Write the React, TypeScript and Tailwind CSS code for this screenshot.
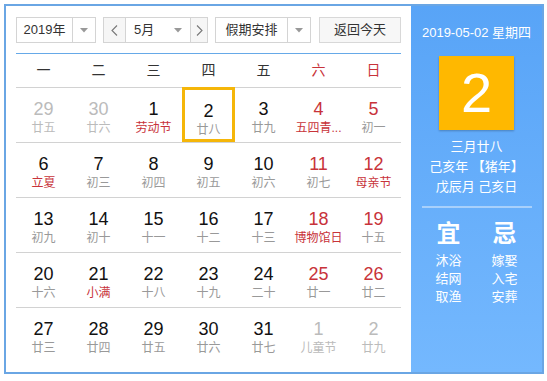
import React from 'react';

// Month view data: [day, lunar, dayTone, lunarTone]
type Tone = 'n' | 'r' | 'g';
type Cell = [string, string, Tone, Tone];

const weeks: Cell[][] = [
  [
    ['29', '廿五', 'g', 'g'],
    ['30', '廿六', 'g', 'g'],
    ['1', '劳动节', 'n', 'r'],
    ['2', '廿八', 'n', 'n'],
    ['3', '廿九', 'n', 'n'],
    ['4', '五四青...', 'r', 'r'],
    ['5', '初一', 'r', 'n'],
  ],
  [
    ['6', '立夏', 'n', 'r'],
    ['7', '初三', 'n', 'n'],
    ['8', '初四', 'n', 'n'],
    ['9', '初五', 'n', 'n'],
    ['10', '初六', 'n', 'n'],
    ['11', '初七', 'r', 'n'],
    ['12', '母亲节', 'r', 'r'],
  ],
  [
    ['13', '初九', 'n', 'n'],
    ['14', '初十', 'n', 'n'],
    ['15', '十一', 'n', 'n'],
    ['16', '十二', 'n', 'n'],
    ['17', '十三', 'n', 'n'],
    ['18', '博物馆日', 'r', 'r'],
    ['19', '十五', 'r', 'n'],
  ],
  [
    ['20', '十六', 'n', 'n'],
    ['21', '小满', 'n', 'r'],
    ['22', '十八', 'n', 'n'],
    ['23', '十九', 'n', 'n'],
    ['24', '二十', 'n', 'n'],
    ['25', '廿一', 'r', 'n'],
    ['26', '廿二', 'r', 'n'],
  ],
  [
    ['27', '廿三', 'n', 'n'],
    ['28', '廿四', 'n', 'n'],
    ['29', '廿五', 'n', 'n'],
    ['30', '廿六', 'n', 'n'],
    ['31', '廿七', 'n', 'n'],
    ['1', '儿童节', 'g', 'g'],
    ['2', '廿九', 'g', 'g'],
  ],
];

const weekdays = ['一', '二', '三', '四', '五', '六', '日'];

const dayColor = { n: 'text-[#111]', r: 'text-[#c8333a]', g: 'text-[#bbbbbb]' };
const lunarColor = { n: 'text-[#999999]', r: 'text-[#c8333a]', g: 'text-[#bbbbbb]' };

const Caret = () => (
  <svg width="8" height="5" viewBox="0 0 8 5" className="block">
    <path d="M0 0 L8 0 L4 4.5 Z" fill="#999" />
  </svg>
);

const Chevron = ({ dir }: { dir: 'l' | 'r' }) => (
  <svg width="7" height="11" viewBox="0 0 7 11" className="block">
    <path
      d={dir === 'l' ? 'M6 0.5 L1 5.5 L6 10.5' : 'M1 0.5 L6 5.5 L1 10.5'}
      fill="none"
      stroke="#777"
      strokeWidth="1.1"
    />
  </svg>
);

const App = () => {
  return (
    <div
      className="w-[547px] h-[381px] bg-white pt-1 pl-1"
      style={{ fontFamily: '"Liberation Sans", "Noto Sans CJK SC", sans-serif' }}
    >
      <div className="w-[540px] h-[370px] border-2 border-[#6aa6e4] flex">
        {/* calendar */}
        <div className="w-[405px] pt-[11px] px-[10px] flex flex-col">
          <div className="flex h-[26px] text-[13px] text-[#333]">
            <div className="w-[80px] flex border border-[#d4d4d4]">
              <div className="w-[55px] flex items-center justify-center">2019年</div>
              <div className="flex-1 border-l border-[#d4d4d4] flex items-center justify-center">
                <Caret />
              </div>
            </div>
            <div className="w-[105px] ml-[7px] flex border border-[#d4d4d4]">
              <div className="w-[22px] bg-[#f6f6f6] border-r border-[#d4d4d4] flex items-center justify-center">
                <Chevron dir="l" />
              </div>
              <div className="flex-1 flex items-center pl-[8px] pr-[8px] justify-between">
                <span>5月</span>
                <Caret />
              </div>
              <div className="w-[17px] bg-[#f6f6f6] border-l border-[#d4d4d4] flex items-center justify-center">
                <Chevron dir="r" />
              </div>
            </div>
            <div className="w-[96px] ml-[7px] flex border border-[#d4d4d4]">
              <div className="w-[71px] flex items-center justify-center">假期安排</div>
              <div className="flex-1 border-l border-[#d4d4d4] flex items-center justify-center">
                <Caret />
              </div>
            </div>
            <div className="w-[82px] ml-auto bg-[#f7f7f7] border border-[#d8d8d8] flex items-center justify-center">
              返回今天
            </div>
          </div>

          <div className="mt-[10px] border-t border-[#66a9e8]" />

          <div className="grid grid-cols-7 h-[33px] text-[14px] items-center text-center text-[#333]">
            {weekdays.map((w, i) => (
              <div key={w} className={i >= 5 ? 'text-[#c8333a]' : ''}>
                {w}
              </div>
            ))}
          </div>

          {weeks.map((week, wi) => (
            <div key={wi} className="grid grid-cols-7 h-[55px] border-t border-[#d2d2d2]">
              {week.map(([d, l, dt, lt], ci) => {
                const selected = wi === 0 && ci === 3;
                return (
                  <div key={ci} className="flex justify-center">
                    <div
                      className={
                        'w-[53px] flex flex-col items-center pt-[10px] ' +
                        (selected ? 'border-[3px] border-[#f5b609] -mt-px pt-[8px]' : '')
                      }
                    >
                      <div className={'text-[18px] leading-[22px] ' + dayColor[dt]}>{d}</div>
                      <div className={'text-[12px] leading-[17px] ' + lunarColor[lt]}>{l}</div>
                    </div>
                  </div>
                );
              })}
            </div>
          ))}
        </div>

        {/* side panel */}
        <div className="flex-1 bg-gradient-to-b from-[#58a4f7] to-[#74b8fe] text-white flex flex-col items-center">
          <div className="mt-[18px] text-[13px] leading-[18px]">2019-05-02 星期四</div>
          <div className="mt-[14px] w-[75px] h-[74px] bg-[#ffb800] shadow-[0_1px_2px_rgba(0,0,0,0.25)] flex items-center justify-center text-[56px] leading-none">
            2
          </div>
          <div className="mt-[7px] text-[13px] leading-[20px] text-center">
            <div>三月廿八</div>
            <div>己亥年 【猪年】</div>
            <div>戊辰月 己亥日</div>
          </div>
          <div className="mt-[9px] w-[110px] border-t-2 border-[#a8d0fb]" />
          <div className="mt-[12px] flex gap-[30px] text-center">
            <div className="flex flex-col items-center">
              <div className="text-[24px] leading-[28px] font-bold">宜</div>
              <div className="mt-[4px] text-[13px] leading-[18px]">
                <div>沐浴</div>
                <div>结网</div>
                <div>取渔</div>
              </div>
            </div>
            <div className="flex flex-col items-center">
              <div className="text-[24px] leading-[28px] font-bold">忌</div>
              <div className="mt-[4px] text-[13px] leading-[18px]">
                <div>嫁娶</div>
                <div>入宅</div>
                <div>安葬</div>
              </div>
            </div>
          </div>
        </div>
      </div>
    </div>
  );
};

export default App;
